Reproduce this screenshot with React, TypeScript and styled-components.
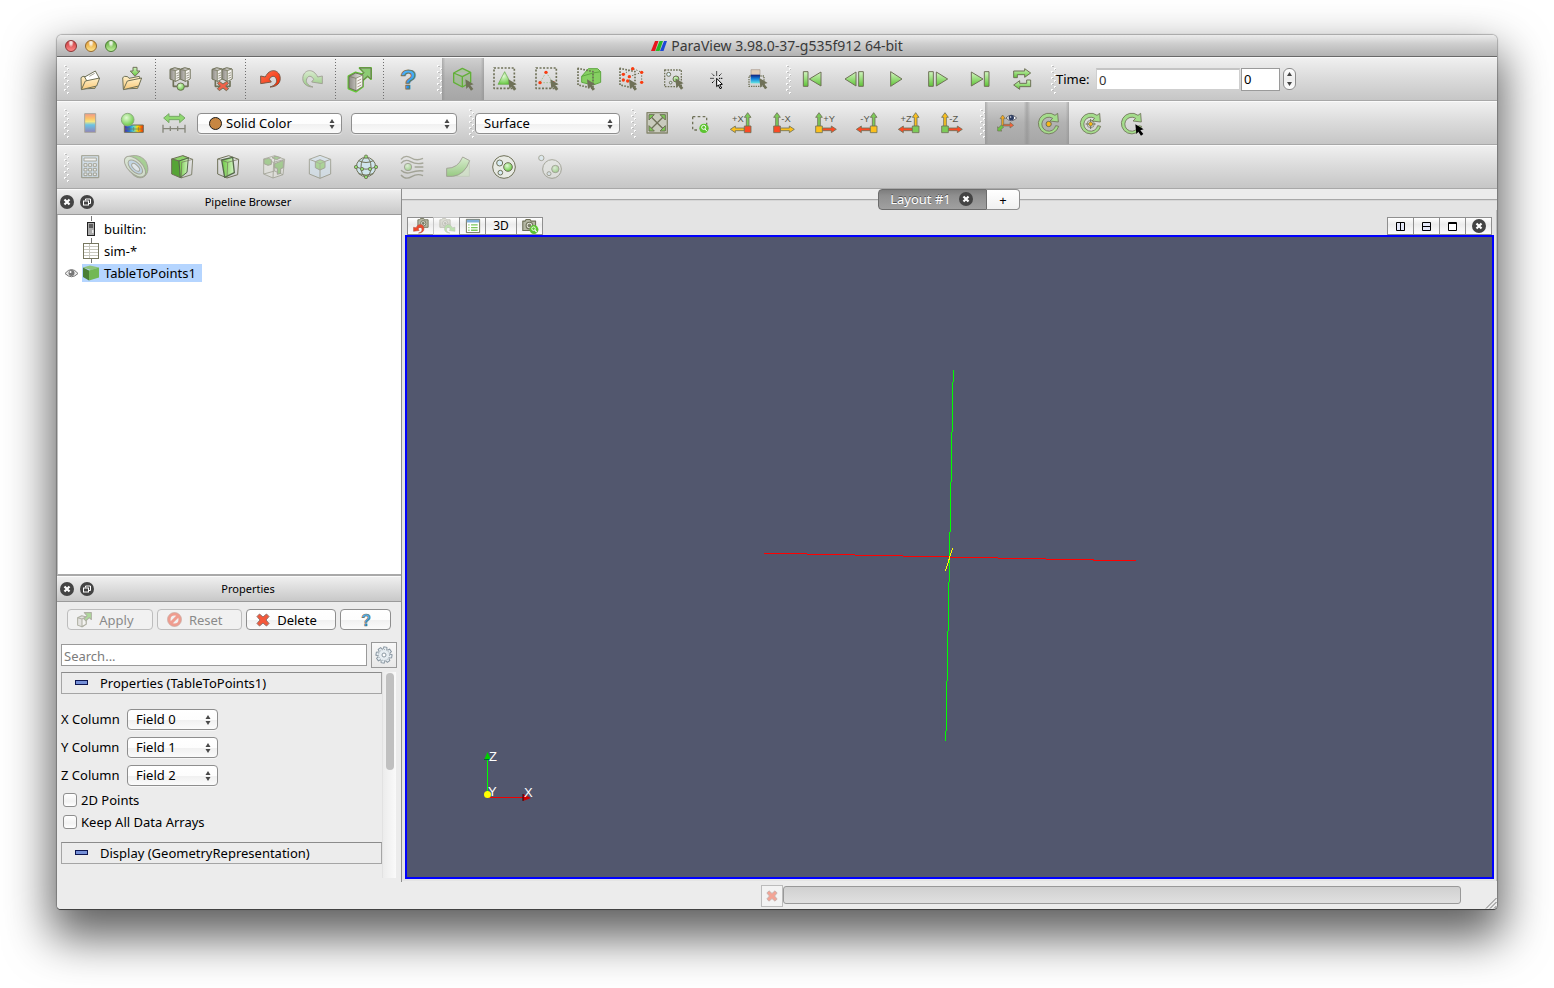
import React from "react";
import styled, { createGlobalStyle, css } from "styled-components";

const GlobalStyle = createGlobalStyle`
  *, *::before, *::after { box-sizing: border-box; }
  html, body { margin: 0; background: #fff; }
  body, button, input, select {
    font-family: "Lucida Grande", "Noto Sans", "Open Sans", sans-serif;
    font-size: 13px;
    line-height: 16px;
    color: #000;
  }
  button, input, select { margin: 0; border-radius: 0; }
`;

/* ---------- window ---------- */

const Desktop = styled.div`
  min-height: 100vh;
  padding: 35px 57px 79px 57px;
  display: flex;
  overflow: hidden;
`;

const AppWindow = styled.div`
  flex: 1;
  min-width: 0;
  display: flex;
  flex-direction: column;
  background: #ececec;
  border-radius: 5px 5px 4px 4px;
  overflow: hidden;
  box-shadow: 0 0 1px 1px rgba(0, 0, 0, 0.25), 0 1px 0 #555, 0 23px 46px 6px rgba(0, 0, 0, 0.62);
`;

const TitleBar = styled.header`
  position: relative;
  height: 22px;
  display: flex;
  align-items: center;
  justify-content: center;
  gap: 4px;
  background: linear-gradient(#ececec, #cfcfcf 40%, #b2b2b2);
  border-bottom: 1px solid #686868;
  color: #3a3a3a;
`;

const Title = styled.h1`
  margin: 0;
  font-size: 14px;
  line-height: 20px;
  font-weight: 400;
`;

const TrafficLights = styled.div`
  position: absolute;
  left: 8px;
  top: 5px;
  display: flex;
  gap: 8px;
`;

const Light = styled.button<{ $top: string; $bottom: string; $edge: string }>`
  width: 12px;
  height: 12px;
  padding: 0;
  border: 1px solid ${(p) => p.$edge};
  border-radius: 6px;
  background: radial-gradient(ellipse at 50% 15%, #ffffffd0 0 15%, transparent 40%),
    linear-gradient(${(p) => p.$top}, ${(p) => p.$bottom});
`;

/* ---------- toolbars ---------- */

const ToolbarRow = styled.div`
  height: 44px;
  flex: none;
  display: flex;
  align-items: stretch;
  background: linear-gradient(#f0f0f0, #dcdcdc 45%, #c6c6c6);
  border-top: 1px solid #fafafa;
  border-bottom: 1px solid #a8a8a8;
`;

const GripBox = styled.span<{ $width: number }>`
  flex: none;
  width: ${(p) => p.$width}px;
  display: flex;
  align-items: center;
  justify-content: flex-end;
`;

const Grip = ({ width = 13 }: { width?: number }) => (
  <GripBox $width={width} aria-hidden="true">
    <svg width="6" height="29" viewBox="-1 0 6 29">
      {[0, 1, 2, 3, 4].map((i) => (
        <g key={i}>
          <rect x="0" y={i * 6} width="2" height="2" fill="#fbfbfb" />
          <rect x="1" y={i * 6 + 1} width="2" height="1" fill="#bdbdbd" />
          <rect x="3" y={i * 6 + 3} width="2" height="2" fill="#fbfbfb" />
          <rect x="4" y={i * 6 + 4} width="2" height="1" fill="#bdbdbd" />
        </g>
      ))}
    </svg>
  </GripBox>
);

const Separator = styled.span`
  flex: none;
  width: 6px;
  margin: 1px 0;
  background: repeating-linear-gradient(#6e6e6e 0 1px, transparent 1px 3px) 2px 0 / 1px 100% no-repeat;
`;

const ToolButton = styled.button<{ $wide?: boolean; $active?: boolean }>`
  flex: none;
  width: ${(p) => (p.$wide ? 46 : 42)}px;
  padding: 0;
  border: 0;
  display: flex;
  align-items: center;
  justify-content: center;
  background: none;
  ${(p) =>
    p.$active &&
    css`
      background: linear-gradient(90deg, #8a8a8a80, transparent 8%, transparent 92%, #8a8a8a80),
        linear-gradient(#d0d0d0, #b2b2b2 50%, #a6a6a6);
    `}
  &:disabled svg { opacity: 0.5; }
`;

const FilterGroup = styled.div`
  display: flex;
  margin-left: -2px;
`;

const Spacer = styled.span<{ $w: number }>`
  flex: none;
  width: ${(p) => p.$w}px;
`;

/* ---------- form controls ---------- */

const SelectBox = styled.span<{ $width: number }>`
  position: relative;
  flex: none;
  align-self: center;
  width: ${(p) => p.$width}px;
  height: 21px;
`;

const Select = styled.select<{ $indent?: number }>`
  appearance: none;
  display: block;
  width: 100%;
  height: 21px;
  padding: 0 18px 1px ${(p) => p.$indent ?? 8}px;
  border: 1px solid #8e8e8e;
  border-radius: 4px;
  background: linear-gradient(#fff, #fdfdfd 50%, #f0f0f0 51%, #fbfbfb);
  box-shadow: 0 1px 0 #ffffff80;
`;

const SelectMark = styled.svg`
  position: absolute;
  right: 7px;
  top: 6px;
  pointer-events: none;
`;

const Swatch = styled.span`
  position: absolute;
  left: 12px;
  top: 4px;
  width: 13px;
  height: 13px;
  border: 1px solid #1c1c1c;
  border-radius: 7px;
  background: #c68642;
  pointer-events: none;
`;

function Combo(props: { width: number; label: string; options: string[]; indent?: number; swatch?: boolean; id?: string }) {
  return (
    <SelectBox $width={props.width}>
      <Select id={props.id} aria-label={props.label} $indent={props.indent}>
        {props.options.map((o) => (
          <option key={o}>{o}</option>
        ))}
      </Select>
      {props.swatch && <Swatch />}
      <SelectMark width="6" height="10" viewBox="0 0 6 10" aria-hidden="true">
        <path d="M3 0 5.500 4H.5ZM3 10 5.500 6H.5Z" fill="#484848" />
      </SelectMark>
    </SelectBox>
  );
}

const TimeLabel = styled.label`
  align-self: center;
  width: 40px;
  white-space: nowrap;
`;

const TimeInput = styled.input`
  align-self: center;
  width: 144px;
  margin-right: 1px;
  height: 22px;
  padding: 1px 2px 0;
  border: 1px solid #cfcfcf;
  border-top: 2px solid #c4c4c4;
  background: #fff;
  color: #333;
`;

const StepInput = styled.input`
  align-self: center;
  width: 39px;
  height: 23px;
  padding: 0 2px;
  border: 1px solid #9a9a9a;
  background: #fff;
`;

const Stepper = styled.span`
  align-self: center;
  margin-left: 3px;
  width: 13px;
  height: 22px;
  display: flex;
  flex-direction: column;
  border: 1px solid #8c8c8c;
  border-radius: 6px;
  background: linear-gradient(#fff, #ededed 50%, #fff);
  overflow: hidden;
`;

const StepButton = styled.button`
  flex: 1;
  padding: 0;
  border: 0;
  background: none;
  display: flex;
  align-items: center;
  justify-content: center;
`;

/* ---------- main area ---------- */

const Main = styled.main`
  flex: 1;
  min-height: 0;
  display: flex;
`;

const Sidebar = styled.aside`
  flex: none;
  width: 345px;
  display: flex;
  flex-direction: column;
  border-right: 1px solid #8e8e8e;
`;

const DockTitle = styled.header`
  position: relative;
  flex: none;
  height: 26px;
  display: flex;
  align-items: center;
  padding: 0 8px 1px 4px;
  gap: 8px;
  border-bottom: 1px solid #9a9a9a;
  border-top: 1px solid #fafafa;
  background: linear-gradient(#efefef, #c8c8c8);
`;

const DockName = styled.h2`
  flex: 1;
  margin: 0 0 0 2px;
  text-align: center;
  font-size: 11px;
  line-height: 14px;
  font-weight: 400;
`;

const RoundButton = styled.button`
  width: 12px;
  height: 14px;
  padding: 0;
  border: 0;
  background: none;
  display: flex;
  align-items: center;
  justify-content: center;
  svg { flex: none; }
`;

const Tree = styled.ul`
  flex: 1;
  margin: 0;
  padding: 3px 0 0;
  list-style: none;
  background: #fff;
  border-bottom: 2px solid #a9a9a9;
  border-left: 1px solid #c0c0c0;
`;

const TreeRow = styled.li`
  height: 22px;
  display: flex;
  align-items: center;
`;

const EyeCell = styled.span`
  width: 24px;
  padding-left: 6px;
  display: flex;
`;

const TreeItem = styled.span<{ $selected?: boolean }>`
  height: 18px;
  padding: 0 6px 0 1px;
  display: flex;
  align-items: center;
  gap: 5px;
  background: ${(p) => (p.$selected ? "#b5d5ff" : "transparent")};
  svg { overflow: visible; }
`;

const ActionRow = styled.div`
  display: flex;
  gap: 4px;
  padding: 7px 10px 0;
`;

const PushButton = styled.button<{ $grow: number; $iconOnly?: boolean }>`
  flex: ${(p) => p.$grow} 1 0;
  height: 21px;
  padding: 0;
  display: flex;
  align-items: center;
  justify-content: center;
  gap: 7px;
  border: 1px solid #8e8e8e;
  border-radius: 4px;
  background: linear-gradient(#fff, #fdfdfd 50%, #f0f0f0 51%, #fbfbfb);
  ${(p) =>
    !p.$iconOnly &&
    css`
      &::after { content: ""; width: 2px; }
    `}
  &:disabled {
    color: #8a8a8a;
    border-color: #bdbdbd;
    background: #f1f1f1;
  }
  &:disabled svg { opacity: 0.5; }
`;

const SearchRow = styled.div`
  display: flex;
  align-items: center;
  gap: 4px;
  padding: 12px 4px 4px;
`;

const SearchInput = styled.input`
  flex: 1;
  min-width: 0;
  height: 22px;
  padding: 1px 2px 0;
  border: 1px solid #9a9a9a;
  background: #fff;
  &::placeholder { color: #7c7c7c; opacity: 1; }
`;

const GearButton = styled.button`
  width: 26px;
  height: 26px;
  padding: 0;
  display: flex;
  align-items: center;
  justify-content: center;
  border: 1px solid #999;
  background: linear-gradient(#f8f8f8, #e9e9e9);
`;

const ScrollArea = styled.div`
  display: flex;
  height: 206px;
  padding: 0 5px 0 4px;
  margin-bottom: 4px;
`;

const ScrollBody = styled.div`
  flex: 1;
  min-width: 0;
`;

const Track = styled.div`
  width: 14px;
  padding: 1px 3px;
  background: linear-gradient(90deg, #ececec, #fafafa);
  border-left: 1px solid #e2e2e2;
`;

const Thumb = styled.div`
  width: 8px;
  height: 97px;
  border-radius: 4px;
  background: #c0c0c0;
`;

const GroupHeader = styled.button`
  width: 100%;
  height: 22px;
  padding: 0 0 0 13px;
  display: flex;
  align-items: center;
  gap: 12px;
  text-align: left;
  border: 1px solid #a5a5a5;
  border-top-color: #8b8b8b;
  background: #ececec;
  white-space: nowrap;
`;

const Minus = styled.span`
  width: 13px;
  height: 5px;
  margin-bottom: 2px;
  border: 1px solid #0c1550;
  background: #7590d8;
`;

const FieldList = styled.div`
  padding: 15px 0 0;
  display: flex;
  flex-direction: column;
  gap: 7px;
`;

const Field = styled.label`
  display: flex;
  align-items: center;
  height: 21px;
`;

const FieldName = styled.span`
  width: 66px;
  padding-bottom: 1px;
  white-space: nowrap;
`;

const Check = styled.label`
  display: flex;
  align-items: center;
  gap: 4px;
  height: 22px;
  padding-left: 2px;
`;

const CheckInput = styled.input`
  appearance: none;
  width: 14px;
  height: 14px;
  border: 1px solid #8e8e8e;
  border-radius: 3px;
  background: linear-gradient(#fff, #f2f2f2 60%, #fff);
`;

const Checks = styled.div`
  padding: 3px 0 9px;
`;

/* ---------- render view ---------- */

const Views = styled.section`
  flex: 1;
  min-width: 0;
  display: flex;
  flex-direction: column;
  padding-bottom: 1px;
`;

const TabBar = styled.div`
  flex: none;
  height: 21px;
  display: flex;
  justify-content: center;
  padding-right: 1px;
  background: linear-gradient(#ececec 10px, #a8a8a8 10px 11px, #d6d6d6 11px 12px, #e4e4e4 12px);
`;

const Tab = styled.button<{ $current?: boolean }>`
  height: 21px;
  border: 1px solid #8f8f8f;
  display: flex;
  align-items: center;
  justify-content: center;
  ${(p) =>
    p.$current
      ? css`
          width: 109px;
          gap: 8px;
          padding: 0 2px 1px 0;
          border-color: #6c6c6c;
          border-radius: 4px 0 0 4px;
          background: linear-gradient(#7d7d7d, #8f8f8f 30%, #a0a0a0);
          color: #fff;
          text-shadow: 0 -1px 0 #555;
        `
      : css`
          width: 33px;
          padding: 0;
          border-left: 0;
          border-radius: 0 4px 4px 0;
          background: linear-gradient(#fff, #f0f0f0);
        `}
`;

const ViewPane = styled.div`
  flex: 1;
  display: flex;
  flex-direction: column;
  padding: 7px 2px 2px 3px;
  background: #e4e4e4;
  border-right: 1px solid #bdbdbd;
`;

const ViewTools = styled.div`
  flex: none;
  display: flex;
  justify-content: space-between;
  padding: 0 3px 0 2px;
`;

const ToolStrip = styled.div`
  display: flex;
`;

const ViewButton = styled.button<{ $w?: number }>`
  width: ${(p) => p.$w ?? 27}px;
  height: 18px;
  margin-right: -1px;
  padding: 0;
  display: flex;
  align-items: center;
  justify-content: center;
  border: 1px solid #8f8f8f;
  background: linear-gradient(#fff, #ececec 40%, #fdfdfd);
  font-size: 12px;
  &:disabled { border-color: #c4c4c4; }
  &:disabled svg { opacity: 0.4; }
`;

const Viewport = styled.div`
  position: relative;
  flex: 1;
  display: grid;
  place-items: center;
  border: 2px solid #0000ff;
  background: #52576e;
`;

const AxisWidget = styled.svg`
  position: absolute;
  left: 73px;
  bottom: 70px;
  font-family: "Liberation Sans", sans-serif;
  font-size: 13px;
`;

const StatusBar = styled.footer`
  flex: none;
  height: 27px;
  display: flex;
  align-items: flex-start;
  padding: 3px 0 0;
  background: #ececec;
`;

const StatusMessage = styled.span`
  flex: 706 1 0;
`;

const AbortButton = styled.button`
  width: 22px;
  height: 22px;
  padding: 0;
  display: flex;
  align-items: center;
  justify-content: center;
  border: 1px solid #bcbcbc;
  background: #f3f3f3;
`;

const Progress = styled.div`
  flex: 677 1 0;
  margin-top: 1px;
  height: 18px;
  border: 1px solid #999;
  border-radius: 3px;
  background: linear-gradient(#d0d0d0, #e0e0e0);
`;

const ResizeCorner = styled.span`
  width: 36px;
  height: 24px;
  display: flex;
  align-items: flex-end;
  justify-content: flex-end;
`;

/* ---------- icons: 24px marks drawn on a 72-unit grid ---------- */

const OLIVE = "#6f7158";

const Ico = ({ children, size = 24 }: { children: React.ReactNode; size?: number }) => (
  <svg width={size} height={size} viewBox="0 0 72 72" fill="none" stroke={OLIVE} strokeWidth="3" strokeLinejoin="round" overflow="visible" aria-hidden="true">
    {children}
  </svg>
);

const HiddenSvg = styled.svg`
  display: block;
  width: 0;
  height: 0;
`;

const Defs = () => (
  <HiddenSvg aria-hidden="true">
    <defs>
      <linearGradient id="green" x1="0" y1="0" x2="0" y2="1"><stop offset="0" stopColor="#d2f5c0" /><stop offset="1" stopColor="#5fc436" /></linearGradient>
      <linearGradient id="face" x1="0" y1="0" x2="1" y2="0"><stop offset="0" stopColor="#6cc840" /><stop offset="1" stopColor="#d4f4c4" /></linearGradient>
      <linearGradient id="folder" x1="0" y1="0" x2="0" y2="1"><stop offset="0" stopColor="#fff0c8" /><stop offset="1" stopColor="#f8c877" /></linearGradient>
      <linearGradient id="metal" x1="0" y1="0" x2="1" y2="0"><stop offset="0" stopColor="#8d8a84" /><stop offset="1" stopColor="#f2f0ec" /></linearGradient>
      <linearGradient id="red" x1="0" y1="0" x2="1" y2="1"><stop offset="0" stopColor="#ff7050" /><stop offset="1" stopColor="#f02a00" /></linearGradient>
      <linearGradient id="blue" x1="0" y1="0" x2="0" y2="1"><stop offset="0" stopColor="#5cc0ff" /><stop offset="1" stopColor="#0f86e8" /></linearGradient>
      <linearGradient id="map" x1="0" y1="0" x2="0" y2="1"><stop offset="0" stopColor="#f29a86" /><stop offset=".25" stopColor="#fbc26a" /><stop offset=".42" stopColor="#f5e680" /><stop offset=".6" stopColor="#6cc4e4" /><stop offset="1" stopColor="#8f82b8" /></linearGradient>
      <linearGradient id="rainbow" x1="0" y1="0" x2="1" y2="0"><stop offset="0" stopColor="#5a2a9a" /><stop offset=".25" stopColor="#1470e0" /><stop offset=".5" stopColor="#5ce0d0" /><stop offset=".7" stopColor="#ffd700" /><stop offset="1" stopColor="#f02800" /></linearGradient>
      <linearGradient id="deep" x1="0" y1="0" x2="0" y2="1"><stop offset="0" stopColor="#101c78" /><stop offset=".5" stopColor="#1488e0" /><stop offset="1" stopColor="#68e8e0" /></linearGradient>
      <radialGradient id="ball" cx=".4" cy=".35" r=".7"><stop offset="0" stopColor="#e2fad4" /><stop offset="1" stopColor="#62c63c" /></radialGradient>
    </defs>
  </HiddenSvg>
);

const Pointer = ({ fill = OLIVE, x = 0, y = 0 }: { fill?: string; x?: number; y?: number }) => (
  <path d={`M${43 + x} ${37 + y}l25 15-10 3 9 11-7 5-8-12-6 7z`} fill={fill} stroke="none" />
);

const DashedSquare = () => <rect x="3" y="3" width="61" height="61" strokeWidth="5" strokeDasharray="6 4.600" />;

const FolderOpen = () => (
  <Ico>
    <path d="M10 66 9 32l6-4 8 1 4 5 30-4 2 8-8 26z" fill="url(#folder)" />
    <path d="m20 30 32-18 11 20-32 18z" fill="#fff" />
    <path d="m34 28 16-9" strokeWidth="2" />
    <path d="m10 68 12-26 43-9-9 24z" fill="url(#folder)" />
  </Ico>
);
const FolderSave = () => (
  <Ico>
    <path d="m10 66-2-34 6-4 9 1 4 5 31-6 3 10-8 26z" fill="url(#folder)" />
    <path d="m10 68 12-26 43-9-9 24z" fill="url(#folder)" />
    <path d="M39 1h12v11h9L45 28 31 12h8z" fill="url(#green)" />
  </Ico>
);
const Server = ({ x }: { x: number }) => (
  <g transform={`translate(${x} 0)`}>
    <path d="m0 7 14-5 16 4v30l-14 7L0 36z" fill="url(#metal)" />
    <path d="M0 7 16 11v32M16 11 30 6" strokeWidth="2" />
    <path d="M16 11 30 6v30l-14 7z" fill="#f6f5f0" strokeWidth="2" />
    <path d="m19 20 8-3m-8 10 8-3m-8 10 8-3" strokeWidth="2.500" stroke="#8b897c" />
  </g>
);
const Connect = () => (
  <Ico>
    <path d="M16 42v16h44V42" strokeWidth="5" />
    <Server x={6} /><Server x={36} />
    <circle cx="38" cy="59" r="11" fill="url(#ball)" />
  </Ico>
);
const Disconnect = () => (
  <Ico>
    <path d="M16 42v16h44V42" strokeWidth="5" />
    <Server x={6} /><Server x={36} />
    <path d="m28 43 11 8 11-8 6 6-9 8 9 8-7 6-10-8-11 8-6-6 9-8-9-8z" fill="#f0634a" />
  </Ico>
);
const UNDO = "M8 27 22 30C34 4 60 6 66 28c4 20-10 32-30 32 17-5 22-14 19-24-4-12-16-10-21 1l6 8L8 50z";
const Undo = () => <Ico><path d={UNDO} fill="url(#red)" stroke="#7a5a48" /></Ico>;
const Redo = () => <Ico><g transform="translate(75 0) scale(-1 1)"><path d={UNDO} fill="url(#green)" /></g></Ico>;
const Extract = () => (
  <Ico>
    <path d="m2 28 20-11 22 6v36L24 73 2 64z" fill="url(#metal)" stroke="#62c834" strokeWidth="7" />
    <path d="m35 3h34v33l-10-9-17 15-9-9 15-16z" fill="#74cc4a" stroke="#5cc02c" strokeWidth="6" />
    <path d="m35 3h34v33l-10-9-17 15-9-9 15-16z" fill="#8ccc74" strokeWidth="3" />
    <path d="m3 28 20-10 21 6v34L24 71 3 63z" fill="url(#metal)" />
    <path d="m24 34 20-10v34L24 71z" fill="#f6f5f0" strokeWidth="2" />
    <path d="m28 42 12-6m-12 15 12-6m-12 15 12-6" strokeWidth="2.500" stroke="#9c8a7c" />
    <path d="M3 28 24 34" strokeWidth="2" />
  </Ico>
);
const Question = ({ size = 24 }: { size?: number }) => (
  <Ico size={size}>
    <text x="37" y="65" textAnchor="middle" fontFamily="Liberation Sans, sans-serif" fontSize="82" fontWeight="700" fill="url(#blue)" strokeWidth="3">?</text>
  </Ico>
);
const CubeSelect = () => (
  <Ico>
    <path d="m8 18 26-14 25 12v30L34 60 8 46zM8 18l26 11 25-13M34 29v31" fill="#8fca72" fillOpacity=".35" stroke="#62b038" strokeWidth="4" />
    <Pointer />
  </Ico>
);
const SelectCells = () => (
  <Ico><DashedSquare /><path d="m35 14 20 38H15z" fill="url(#ball)" strokeWidth="2" stroke="#66a84a" /><Pointer x={3} /></Ico>
);
const Dots = ({ at }: { at: number[][] }) => (
  <>{at.map(([x, y]) => <circle key={`${x}-${y}`} cx={x} cy={y} r="5" fill="#fa3c10" stroke="none" />)}</>
);
const SelectPoints = () => (
  <Ico><DashedSquare /><path d="m33 16 22 31H15z" strokeWidth="3" strokeDasharray="5 4" stroke="#a4c49a" /><Dots at={[[33, 16], [15, 47], [55, 47]]} /><Pointer x={3} /></Ico>
);
const Trapezoid = () => <path d="M3 4v50l45 10V14z" strokeWidth="5" strokeDasharray="5 4" />;
const FrustumCells = () => (
  <Ico>
    <path d="M14 28 34 5h28l9 9v32l-23 8-34-8z" fill="#86d062" stroke="#5ea840" />
    <path d="m14 28 34-10 23-4M48 18v36" stroke="#5ea840" />
    <Trapezoid /><Pointer x={-13} />
  </Ico>
);
const FrustumPoints = () => (
  <Ico>
    <path d="m13 22 28-18 27 12v30M31 29l37-13" strokeDasharray="4 5" />
    <Trapezoid /><Dots at={[[41, 5], [68, 16], [68, 46], [13, 22], [31, 29], [13, 39], [26, 42]]} /><Pointer x={-13} />
  </Ico>
);
const SelectBlocks = () => (
  <Ico>
    <rect x="11" y="9" width="50" height="50" strokeWidth="4" strokeDasharray="5 3.500" />
    <circle cx="23" cy="22" r="6" fill="#dff0f8" /><circle cx="45" cy="36" r="9" fill="url(#ball)" /><circle cx="29" cy="47" r="4" fill="#dff0f8" />
    <Pointer y={-3} />
  </Ico>
);
const CrosshairPick = () => (
  <Ico>
    <g stroke="#000"><path d="M41 13v14m0 14v8M22 34h12m14 0h12M27 20l8 8m20-8-8 8M27 48l8-8" strokeDasharray="4 2" />
      <path d="m41 34 17 18-8 1 6 10-5 2-5-11-5 5z" fill="#fff" /></g>
  </Ico>
);
const ColorSelect = () => (
  <Ico>
    <rect x="18" y="8" width="27" height="18" fill="#e0cdb8" stroke="#a89c90" strokeWidth="2" />
    <rect x="17" y="23" width="28" height="26" fill="url(#deep)" stroke="none" />
    <path d="M17 27h-5v31h45V27H45" strokeWidth="4" strokeDasharray="4 3" />
    <Pointer y={-4} />
  </Ico>
);
const First = () => <Ico><g fill="url(#green)"><path d="M10 14h14v44H10z" /><path d="M63 15v42L28 36z" /></g></Ico>;
const Prev = () => <Ico><g fill="url(#green)"><path d="M50 14h14v44H50z" /><path d="M42 15v42L9 36z" /></g></Ico>;
const Play = () => <Ico><path d="M20 14v44l34-22z" fill="url(#green)" /></Ico>;
const Next = () => <Ico><g fill="url(#green)"><path d="M8 14h14v44H8z" /><path d="M31 15v42l34-21z" /></g></Ico>;
const Last = () => <Ico><g fill="url(#green)"><path d="M49 14h14v44H49z" /><path d="M10 15v42l35-21z" /></g></Ico>;
const Loop = () => (
  <Ico><g fill="url(#green)"><path d="M11 32V12h33V5l18 13-18 13v-8H22v9z" /><path d="M62 39v20H29v8L11 54l18-13v8h21V39z" /></g></Ico>
);
const ColorMap = () => <Ico><rect x="20" y="8" width="33" height="56" fill="url(#map)" stroke="#a9a79c" /></Ico>;
const Legend = () => (
  <Ico><rect x="13" y="42" width="57" height="22" fill="url(#rainbow)" /><path d="M13 54h57M27 48v12m14-12v12m14-12v12" strokeWidth="2" /><circle cx="23" cy="26" r="19" fill="url(#ball)" stroke="#8cab80" /></Ico>
);
const Rescale = () => (
  <Ico><path d="M5 21 21 8v8h32V8l16 13-16 14v-9H21v9z" fill="#8fd870" stroke="#76a866" /><path d="M3 41v24M25 46v14M47 46v14M69 41v24M3 53h66" stroke="#85867a" strokeWidth="4" /></Ico>
);
const ResetCamera = () => (
  <Ico>
    <rect x="6" y="5" width="61" height="61" fill="#c9cbbd" stroke="#85866e" strokeWidth="4" />
    <path d="m15 14 43 43M58 14 15 57" strokeWidth="4" />
    <g fill="#7ccc54" strokeWidth="3"><path d="M12 11h16L12 27zM61 11v16L45 11zM12 60V44l16 16zM61 60H45l16-16z" /></g>
  </Ico>
);
const ZoomBox = () => (
  <Ico>
    <path d="M17 17h42v24M17 17v40h20" strokeWidth="4" strokeDasharray="8 7" />
    <circle cx="51" cy="52" r="14" fill="#5cc430" stroke="none" /><circle cx="50" cy="49" r="6" stroke="#fff" /><path d="m54 54 6 7" stroke="#fff" />
  </Ico>
);
const AxisView = ({ label, flip, box, up, side }: { label: string; flip?: boolean; box: string; up: string; side: string }) => (
  <Ico>
    <g transform={flip ? undefined : "translate(74 0) scale(-1 1)"} strokeWidth="2.500">
      <path d="M14 46V19H8L18 5l10 14h-6v27z" fill={up} />
      <path d="M28 51h27v-6l15 10-15 10v-6H28z" fill={side} />
      <rect x="8" y="45" width="20" height="20" fill={box} />
    </g>
    <text x={flip ? 31 : 44} textAnchor={flip ? "start" : "end"} y="34" fontSize="28" fontFamily="Liberation Sans, sans-serif" fill="#55564a" stroke="none">{label}</text>
  </Ico>
);
const ShowAxes = () => (
  <Ico>
    <g strokeWidth="2"><path d="M23 44V23h-5l8-11 8 11h-5v21z" fill="#f5a820" /><path d="M28 40h20v-6l11 9-11 8v-6H28z" fill="#f4623a" /><path d="m22 42-9 9-2-4v13h13l-4-3 9-9z" fill="#6cc644" /></g>
    <path d="M36 21q16-17 32 0-16 16-32 0z" fill="#fff" stroke="#4a4e5c" strokeWidth="2.500" /><circle cx="52" cy="20" r="8" fill="#2f3e62" stroke="none" /><circle cx="50" cy="18" r="2" fill="#fff" stroke="none" />
  </Ico>
);
const Ring = ({ x = 0 }: { x?: number }) => (
  <g transform={`translate(${x} 0)`}>
    <path d="M68 46A31 31 0 1 1 57 13l8-6 2 26-25-3 8-8a21 21 0 1 0 9 22z" fill="#a4dc8c" strokeWidth="2.500" />
  </g>
);
const RotateCenter = () => <Ico><Ring /><circle cx="38" cy="39" r="8" fill="#f8b818" /></Ico>;
const PickCenter = () => (
  <Ico><Ring /><circle cx="38" cy="39" r="11" strokeWidth="2" /><path d="M38 24v30M23 39h30" strokeWidth="3" /><circle cx="38" cy="39" r="6" fill="#f8b818" strokeWidth="2" /></Ico>
);
const ResetCenter = () => <Ico><Ring x={-3} /><Pointer fill="#000" x={3} y={3} /></Ico>;

const Calculator = () => (
  <Ico>
    <rect x="11" y="2" width="51" height="66" rx="2" fill="#c4dcee" strokeWidth="4" />
    <rect x="18" y="9" width="37" height="9" fill="#fff" />
    {[26, 40, 54].map((y) => [18, 32, 46].map((x) => <rect key={`${x}${y}`} x={x} y={y} width="9" height="8" fill="#fff" />))}
  </Ico>
);
const Contour = () => (
  <Ico>
    <path d="M2 12C20-4 52-2 66 20c8 18 8 32-4 44-12 8-26 4-36-6z" fill="#6fc04c" />
    <ellipse cx="33" cy="35" rx="21" ry="39" transform="rotate(-46 33 35)" fill="#cfe6c4" />
    <ellipse cx="34" cy="36" rx="14" ry="27" transform="rotate(-46 34 36)" fill="#a8cdea" />
    <ellipse cx="35" cy="37" rx="7" ry="15" transform="rotate(-46 35 37)" fill="#e6f2fa" />
  </Ico>
);
const CubeFrame = ({ fill = "none" }: { fill?: string }) => (
  <path d="M5 12 38 2l30 11-5 46-30 10L5 57zM5 12l30 10 33-9M35 22l-2 47M38 2v46L5 57m33-9 25 11" fill={fill} strokeWidth="2.500" />
);
const Clip = () => (
  <Ico>
    <path d="m38 2 30 11-3 46-32 10-2-46z" strokeWidth="2.500" />
    <path d="M5 12 38 2l19 7-30 9z" fill="#8cd468" strokeWidth="3" />
    <path d="m5 12 22 6 4 50L5 57z" fill="#56a436" strokeWidth="3" />
    <path d="M27 18 55 9l-4 43-20 16z" fill="url(#face)" stroke="#54694a" strokeWidth="3" />
    <path d="m35 22 33-9M35 22l-1 46" strokeWidth="2" />
  </Ico>
);
const Slice = () => (
  <Ico>
    <path d="M5 12 38 2l30 11-3 46-32 10L5 57z" strokeWidth="3" />
    <path d="M17 15 50 7l5 46-29 14z" fill="url(#face)" stroke="#54694a" strokeWidth="4" />
    <path d="m5 12 30 10 33-9M35 22l-2 47" strokeWidth="2" />
  </Ico>
);
const Threshold = () => (
  <Ico><CubeFrame fill="#e6e6de" /><path d="m6 13 14-3 8 4v14l-10 3-12-5zM38 26l26-10v22l-8 3v14l-10 3V40l-8-2zM30 8l12-4 14 4-12 6z" fill="#6cb84a" /></Ico>
);
const Subset = () => (
  <Ico>
    <path d="m4 13 32-12 32 12v44L36 70 4 57z" fill="#cfe2f0" /><path d="m4 13 32 12 32-12M36 25v45" />
    <path d="m22 20 14-6 15 6v18L36 45 22 38z" fill="#7ccc58" /><path d="m22 20 14 6 15-6M36 26v19" strokeWidth="2" />
  </Ico>
);
const Glyph = () => (
  <Ico>
    <circle cx="36" cy="36" r="29" fill="#cfe4ec" /><ellipse cx="36" cy="36" rx="15" ry="29" /><path d="M7 36q29 13 58 0M14 17q22 11 44 0M14 56q22 9 44 0" />
    {[[36, 5], [6, 36], [66, 36], [36, 66], [24, 42], [48, 42]].map(([x, y]) => <circle key={`${x}-${y}`} cx={x} cy={y} r="5" fill="#90dc70" strokeWidth="2.500" />)}
  </Ico>
);
const Streams = () => (
  <Ico>
    <path d="M3 13c10-12 20-11 31-4s20 8 35 1M3 25c8-10 18-11 29-5s22 8 38 4M3 46c10 10 18 10 30 6s24-6 37-4M3 60c10 12 22 11 32 5s22-8 34-3M44 36h26" strokeWidth="4" />
    <circle cx="24" cy="36" r="11" fill="url(#ball)" />
  </Ico>
);
const Warp = () => (
  <Ico><path d="M2 64V40q30 4 44-26L52 7l18 10v47z" fill="#cfe8c0" stroke="#b9c8ae" /><path d="M2 40Q36 40 50 6l21 11Q56 60 20 64H2z" fill="url(#green)" /></Ico>
);
const Group = () => (
  <Ico><circle cx="36" cy="36" r="34" fill="#e8eae4" /><circle cx="48" cy="36" r="13" fill="url(#ball)" /><circle cx="23" cy="24" r="9" fill="#d8ecf4" /><circle cx="25" cy="53" r="7" fill="#d8ecf4" /></Ico>
);
const ExtractLevel = () => (
  <Ico><circle cx="42" cy="42" r="28" fill="#e8eae4" /><circle cx="10" cy="9" r="8" fill="#d8ecf4" /><circle cx="52" cy="42" r="11" fill="url(#ball)" /><circle cx="33" cy="56" r="6" fill="#d8ecf4" /></Ico>
);
const Camera = () => (
  <>
    <path d="M22 8h8l4-6h14l4 6h16v34H22z" fill="#b5b7a4" strokeWidth="4" />
    <circle cx="46" cy="24" r="12" fill="#e5e6dc" strokeWidth="4" /><circle cx="46" cy="24" r="5" fill="#777a66" />
  </>
);
const CameraUndo = () => <Ico size={16}><Camera /><g transform="translate(-4 20) scale(.8)"><path d={UNDO} fill="#ee4a2c" stroke="#b4584a" strokeWidth="3" /></g></Ico>;
const CameraRedo = () => <Ico size={16}><g transform="translate(-18 0)"><Camera /></g><g transform="translate(78 20) scale(-.8 .8)"><path d={UNDO} fill="#6cc84c" strokeWidth="3" /></g></Ico>;
const CameraZoom = () => <Ico size={16}><g transform="translate(-24 4) scale(1.250)"><Camera /></g><circle cx="54" cy="52" r="20" fill="#5cc430" stroke="none" /><circle cx="52" cy="48" r="8" stroke="#fff" strokeWidth="4" /><path d="m58 55 8 9" stroke="#fff" strokeWidth="5" /></Ico>;
const ViewOptions = () => (
  <Ico size={14}><rect x="2" y="2" width="68" height="68" fill="#fff" strokeWidth="5" /><path d="M4 4h64v14H4z" fill="#7fb0dc" stroke="none" /><path d="M12 30h6m8 0h34M12 44h6m8 0h34M12 58h6m8 0h34" stroke="#7cc85c" strokeWidth="7" /></Ico>
);

const CloseIcon = () => (
  <svg width="14" height="14" viewBox="0 0 14 14" aria-hidden="true"><circle cx="7" cy="7" r="7" fill="#444" /><path d="m4.500 4.500 5 5m0-5-5 5" stroke="#fff" strokeWidth="2.200" /></svg>
);
const FloatIcon = () => (
  <svg width="14" height="14" viewBox="0 0 14 14" fill="none" stroke="#fff" aria-hidden="true"><circle cx="7" cy="7" r="7" fill="#444" stroke="none" /><rect x="3.500" y="6" width="5" height="4" /><path d="M5.500 5.500V4h5v4.500h-2" /></svg>
);
const RedCross = ({ size = 14, faded }: { size?: number; faded?: boolean }) => (
  <svg width={size} height={size} viewBox="0 0 14 14" opacity={faded ? 0.5 : 1} aria-hidden="true"><path d="m3.500 1 3.500 3 3.500-3L13 3.500 10 7l3 3.500-2.500 2.500L7 10l-3.500 3L1 10.500 4 7 1 3.500z" fill="#f4583a" stroke="#94706a" /></svg>
);
const NoEntry = () => (
  <svg width="15" height="15" viewBox="0 0 15 15" fill="none" aria-hidden="true"><circle cx="7.500" cy="7.500" r="5.500" stroke="#ee4a30" strokeWidth="3" /><path d="m11 4-7 7" stroke="#ee4a30" strokeWidth="3" /><circle cx="7.500" cy="7.500" r="7" stroke="#a06858" strokeWidth=".7" /></svg>
);
const Gear = () => (
  <svg width="18" height="18" viewBox="-9 -9 18 18" fill="#e6edf2" stroke="#8b98a2" aria-hidden="true">
    {[0, 45, 90, 135, 180, 225, 270, 315].map((a) => (
      <path key={a} d="M-2-5.500-1.500-8h3L2-5.500" transform={`rotate(${a + 10})`} />
    ))}
    <circle r="5.500" strokeDasharray="1 1.300" /><circle r="2" fill="#fff" />
  </svg>
);
const Eye = () => (
  <svg width="15" height="10" viewBox="0 0 15 10" aria-hidden="true"><path d="M1 5.500q6.500-8 13 0-6.500 6.500-13 0z" fill="#ececec" stroke="#777" /><circle cx="7.500" cy="5" r="3" fill="#777" /><circle cx="6.500" cy="4" r="1" fill="#fff" /></svg>
);
const Logo = () => (
  <svg width="16" height="12" viewBox="0 0 16 12" aria-hidden="true"><path d="M4 1h3.500L4 11H0z" fill="#e8141c" /><path d="M8.500 1H12L8.500 11h-4z" fill="#28b428" /><path d="M13 1h3l-3.500 10H9z" fill="#1c48d8" /></svg>
);
const ServerIcon = () => (
  <svg width="16" height="16" viewBox="0 0 16 16" aria-hidden="true"><path d="M8.500-5v5M8.500 17v2" stroke="#777" /><rect x="4.500" y="1.500" width="7" height="13" fill="#aaa" stroke="#222" /><path d="M6 4h4M6 6h4" stroke="#111" /><path d="M9 9h1.500v3H9z" fill="#e8e8e8" /></svg>
);
const TableIcon = () => (
  <svg width="16" height="16" viewBox="0 0 16 16" aria-hidden="true"><path d="M8.500-4v4M8.500 16v4" stroke="#777" /><rect x=".5" y=".5" width="15" height="15" fill="#fff" stroke="#77775f" /><path d="M1 3.500h14M1 6.500h14M1 9.500h14M1 12.500h14M6.500 1v14" stroke="#c8c8be" /></svg>
);
const BoxIcon = () => (
  <svg width="16" height="16" viewBox="0 0 16 16" aria-hidden="true"><path d="m0 2.500 7-2 9 2-8 2.500z" fill="#8fc47c" /><path d="m0 2.500 6 3v10l-6-3.500z" fill="#4a7f36" /><path d="m6 5.500 10-3v10l-10 3z" fill="#72b856" /></svg>
);

/* ---------- page ---------- */

type Tool = { name: string; icon: React.FC; active?: boolean; off?: boolean };

const Tools = ({ items, wide }: { items: Tool[]; wide?: boolean }) => (
  <>
    {items.map(({ name, icon: Icon, active, off }) => (
      <ToolButton key={name} type="button" title={name} aria-label={name} $wide={wide} $active={active} disabled={off}>
        <Icon />
      </ToolButton>
    ))}
  </>
);

const G = "#7ccb58";
const Y = "#fbbf1c";
const R = "#fb4a24";

const selectionTools: Tool[] = [
  { name: "Interact", icon: CubeSelect, active: true },
  { name: "Select cells", icon: SelectCells },
  { name: "Select points", icon: SelectPoints },
  { name: "Select cells through", icon: FrustumCells },
  { name: "Select points through", icon: FrustumPoints },
  { name: "Select blocks", icon: SelectBlocks },
  { name: "Pick point", icon: CrosshairPick },
  { name: "Select by color", icon: ColorSelect },
];

const playTools: Tool[] = [
  { name: "First frame", icon: First },
  { name: "Previous frame", icon: Prev },
  { name: "Play", icon: Play },
  { name: "Next frame", icon: Next },
  { name: "Last frame", icon: Last },
  { name: "Loop", icon: Loop },
];

const cameraTools: Tool[] = [
  { name: "Reset camera", icon: ResetCamera },
  { name: "Zoom to box", icon: ZoomBox },
  { name: "View +X", icon: () => <AxisView label="+X" box={R} up={G} side={Y} /> },
  { name: "View -X", icon: () => <AxisView label="-X" flip box={R} up={G} side={Y} /> },
  { name: "View +Y", icon: () => <AxisView label="+Y" flip box={Y} up={G} side={R} /> },
  { name: "View -Y", icon: () => <AxisView label="-Y" box={Y} up={G} side={R} /> },
  { name: "View +Z", icon: () => <AxisView label="+Z" box={G} up={Y} side={R} /> },
  { name: "View -Z", icon: () => <AxisView label="-Z" flip box={G} up={Y} side={R} /> },
];

const centerTools: Tool[] = [
  { name: "Show orientation axes", icon: ShowAxes, active: true },
  { name: "Show center", icon: RotateCenter, active: true },
  { name: "Reset center", icon: PickCenter },
  { name: "Pick center", icon: ResetCenter },
];

const filterTools: Tool[] = [
  { name: "Calculator", icon: Calculator, off: true },
  { name: "Contour", icon: Contour, off: true },
  { name: "Clip", icon: Clip },
  { name: "Slice", icon: Slice },
  { name: "Threshold", icon: Threshold, off: true },
  { name: "Extract subset", icon: Subset, off: true },
  { name: "Glyph", icon: Glyph },
  { name: "Stream tracer", icon: Streams, off: true },
  { name: "Warp by vector", icon: Warp, off: true },
  { name: "Group datasets", icon: Group },
  { name: "Extract level", icon: ExtractLevel, off: true },
];

const DockHeader = ({ name }: { name: string }) => (
  <DockTitle>
    <RoundButton type="button" aria-label={`Close ${name}`}><CloseIcon /></RoundButton>
    <RoundButton type="button" aria-label={`Float ${name}`}><FloatIcon /></RoundButton>
    <DockName>{name}</DockName>
  </DockTitle>
);

export default function App() {
  return (
    <>
      <GlobalStyle />
      <Defs />
      <Desktop>
        <AppWindow>
          <TitleBar>
            <TrafficLights>
              <Light type="button" aria-label="Close" $top="#c8383c" $bottom="#ff8a88" $edge="#8c3434" />
              <Light type="button" aria-label="Minimize" $top="#e0982c" $bottom="#ffe48c" $edge="#94682c" />
              <Light type="button" aria-label="Zoom" $top="#5ea83c" $bottom="#c0f09c" $edge="#4c7c34" />
            </TrafficLights>
            <Logo />
            <Title>ParaView 3.98.0-37-g535f912 64-bit</Title>
          </TitleBar>

          <ToolbarRow>
            <Grip width={12} />
            <Tools items={[{ name: "Open", icon: FolderOpen }, { name: "Save data", icon: FolderSave }]} />
            <Separator />
            <Tools items={[{ name: "Connect", icon: Connect }, { name: "Disconnect", icon: Disconnect }]} />
            <Separator />
            <Tools items={[{ name: "Undo", icon: Undo }, { name: "Redo", icon: Redo, off: true }]} />
            <Separator />
            <Tools items={[{ name: "Auto apply", icon: Extract }]} />
            <Separator />
            <Tools items={[{ name: "Help", icon: Question }]} />
            <Grip />
            <Tools items={selectionTools} />
            <Grip />
            <Tools items={playTools} />
            <Grip />
            <TimeLabel htmlFor="time">Time:</TimeLabel>
            <TimeInput id="time" defaultValue="0" />
            <StepInput aria-label="Time step" defaultValue="0" />
            <Stepper>
              <StepButton type="button" aria-label="Next step"><svg width="5" height="4" viewBox="0 0 5 4"><path d="m2.500 0 2.500 4H0z" fill="#444" /></svg></StepButton>
              <StepButton type="button" aria-label="Previous step"><svg width="5" height="4" viewBox="0 0 5 4"><path d="m2.500 4 2.500-4H0z" fill="#444" /></svg></StepButton>
            </Stepper>
          </ToolbarRow>

          <ToolbarRow>
            <Grip width={12} />
            <Tools items={[{ name: "Edit color map", icon: ColorMap }, { name: "Color legend", icon: Legend }, { name: "Rescale to data range", icon: Rescale }]} />
            <Spacer $w={2} />
            <Combo width={145} label="Color by" options={["Solid Color"]} indent={28} swatch />
            <Spacer $w={9} />
            <Combo width={106} label="Component" options={[""]} />
            <Grip width={17} />
            <Spacer $w={1} />
            <Combo width={145} label="Representation" options={["Surface"]} />
            <Grip width={16} />
            <Tools items={cameraTools} />
            <Grip />
            <Tools items={centerTools} />
          </ToolbarRow>

          <ToolbarRow>
            <Grip width={12} />
            <FilterGroup>
              <Tools wide items={filterTools} />
            </FilterGroup>
          </ToolbarRow>

          <Main>
            <Sidebar>
              <DockHeader name="Pipeline Browser" />
              <Tree>
                <TreeRow><EyeCell /><TreeItem><ServerIcon />builtin:</TreeItem></TreeRow>
                <TreeRow><EyeCell /><TreeItem><TableIcon />sim-*</TreeItem></TreeRow>
                <TreeRow><EyeCell><Eye /></EyeCell><TreeItem $selected><BoxIcon />TableToPoints1</TreeItem></TreeRow>
              </Tree>
              <DockHeader name="Properties" />
              <ActionRow>
                <PushButton type="button" disabled $grow={86}><Ico size={15}><g strokeWidth="5"><path d="m3 28 20-10 21 6v34L24 71 3 63z" fill="#d8d6d0" /><path d="m24 34 20-10v34L24 71zM3 28l21 6" fill="#f6f5f0" /><path d="M35 3h34v33l-10-9-17 15-9-9 15-16z" fill="#6cc444" /></g></Ico>Apply</PushButton>
                <PushButton type="button" disabled $grow={85}><NoEntry />Reset</PushButton>
                <PushButton type="button" $grow={91}><RedCross />Delete</PushButton>
                <PushButton type="button" aria-label="Help" $grow={50} $iconOnly><Question size={14} /></PushButton>
              </ActionRow>
              <SearchRow>
                <SearchInput type="text" aria-label="Search properties" placeholder="Search..." />
                <GearButton type="button" aria-label="Advanced properties"><Gear /></GearButton>
              </SearchRow>
              <ScrollArea>
                <ScrollBody>
                  <GroupHeader type="button"><Minus />Properties (TableToPoints1)</GroupHeader>
                  <FieldList>
                    {["X", "Y", "Z"].map((axis, i) => (
                      <Field key={axis} htmlFor={`column-${axis}`}>
                        <FieldName>{axis} Column</FieldName>
                        <Combo id={`column-${axis}`} width={91} label={`${axis} Column`} options={[`Field ${i}`]} />
                      </Field>
                    ))}
                  </FieldList>
                  <Checks>
                    <Check><CheckInput type="checkbox" />2D Points</Check>
                    <Check><CheckInput type="checkbox" />Keep All Data Arrays</Check>
                  </Checks>
                  <GroupHeader type="button"><Minus />Display (GeometryRepresentation)</GroupHeader>
                </ScrollBody>
                <Track><Thumb /></Track>
              </ScrollArea>
            </Sidebar>

            <Views>
              <TabBar>
                <Tab type="button" $current>Layout #1 <CloseIcon /></Tab>
                <Tab type="button" aria-label="New layout">+</Tab>
              </TabBar>
              <ViewPane>
                <ViewTools>
                  <ToolStrip>
                    <ViewButton type="button" aria-label="Camera undo"><CameraUndo /></ViewButton>
                    <ViewButton type="button" aria-label="Camera redo" disabled><CameraRedo /></ViewButton>
                    <ViewButton type="button" aria-label="View options"><ViewOptions /></ViewButton>
                    <ViewButton type="button" $w={32}>3D</ViewButton>
                    <ViewButton type="button" aria-label="Adjust camera"><CameraZoom /></ViewButton>
                  </ToolStrip>
                  <ToolStrip>
                    <ViewButton type="button" aria-label="Split horizontal"><svg width="9" height="9" viewBox="0 0 9 9"><path d="M.5.5h8v8h-8zM4.500 0v9" fill="#e4e8f8" stroke="#000" /></svg></ViewButton>
                    <ViewButton type="button" aria-label="Split vertical"><svg width="9" height="9" viewBox="0 0 9 9"><path d="M.5.5h8v8h-8zM0 4.500h9" fill="#e4e8f8" stroke="#000" /></svg></ViewButton>
                    <ViewButton type="button" aria-label="Maximize"><svg width="9" height="9" viewBox="0 0 9 9"><path d="M.5.5h8v8h-8zM0 1.500h9" fill="#fff" stroke="#000" /></svg></ViewButton>
                    <ViewButton type="button" aria-label="Close view"><CloseIcon /></ViewButton>
                  </ToolStrip>
                </ViewTools>
                <Viewport>
                  <svg width="389" height="394" viewBox="0 0 389 394" shapeRendering="crispEdges" aria-hidden="true">
                    <path d="m9 193.100 372 7.800" stroke="#f00" />
                    <path d="m198.260 10-7.450 371" stroke="#0f0" />
                    <path d="m197.500 188-7 23" stroke="#ff0" />
                  </svg>
                  <AxisWidget width="60" height="60" viewBox="0 0 60 60" aria-hidden="true">
                    <path d="M7.500 13v36" stroke="#0f0" /><path d="M8 50.500h36" stroke="#e00" />
                    <path d="m7.500 5 3.500 8H4z" fill="#00d000" /><path d="M4 12.500h7" stroke="#063" />
                    <path d="m51 51-8-4v7z" fill="#d00000" /><path d="M43 47v7" stroke="#300" />
                    <circle cx="7.500" cy="47.500" r="3.500" fill="#ff0" />
                    <g fill="#fff"><text x="9" y="14">Z</text><text x="8" y="49">Y</text><text x="44" y="50">X</text></g>
                  </AxisWidget>
                </Viewport>
              </ViewPane>
            </Views>
          </Main>

          <StatusBar>
            <StatusMessage />
            <AbortButton type="button" aria-label="Abort" disabled><RedCross size={12} faded /></AbortButton>
            <Progress role="progressbar" aria-label="Progress" />
            <ResizeCorner><svg width="12" height="12" viewBox="0 0 12 12" stroke="#777" aria-hidden="true"><path d="M1 11.500 11.500 1M5 11.500 11.500 5M9 11.500 11.500 9" /></svg></ResizeCorner>
          </StatusBar>
        </AppWindow>
      </Desktop>
    </>
  );
}
